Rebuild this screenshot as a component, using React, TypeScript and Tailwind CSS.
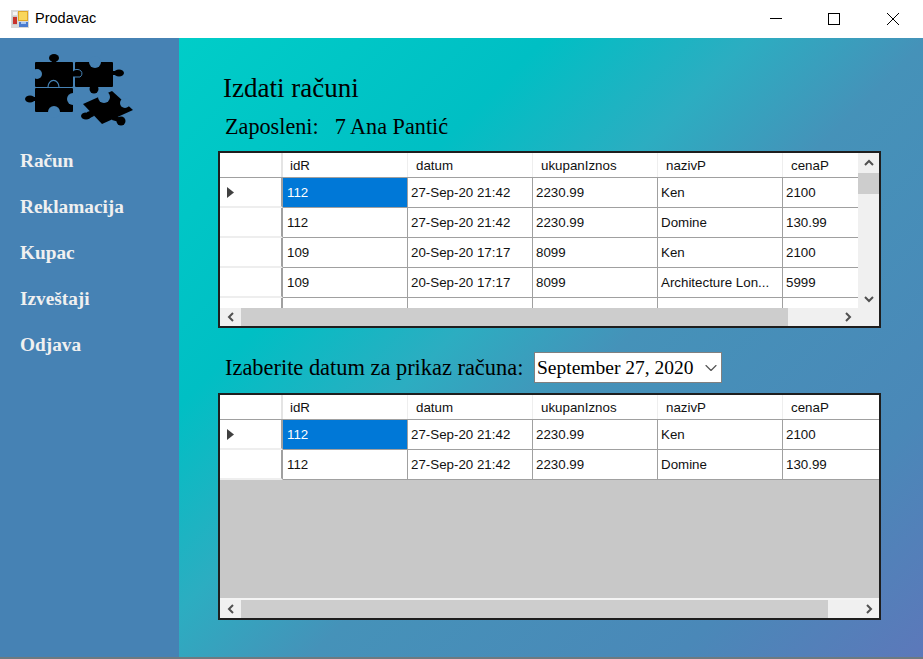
import React from 'react';
import { ChevronDown } from 'lucide-react';

const SERIF = "font-['Liberation_Serif',serif]";
const SANS = "font-['Liberation_Sans',sans-serif]";

const columns = ['idR', 'datum', 'ukupanIznos', 'nazivP', 'cenaP'];

const topRows = [
  ['112', '27-Sep-20 21:42', '2230.99', 'Ken', '2100'],
  ['112', '27-Sep-20 21:42', '2230.99', 'Domine', '130.99'],
  ['109', '20-Sep-20 17:17', '8099', 'Ken', '2100'],
  ['109', '20-Sep-20 17:17', '8099', 'Architecture Lon...', '5999'],
  ['', '', '', '', ''],
];

const bottomRows = topRows.slice(0, 2);

const menu = ['Račun', 'Reklamacija', 'Kupac', 'Izveštaji', 'Odjava'];

const ArrowIcon = ({ dir }: { dir: 'left' | 'right' | 'up' | 'down' }) => {
  const d = {
    left: 'M7 1 L3 5 L7 9',
    right: 'M3 1 L7 5 L3 9',
    up: 'M1 7 L5 3 L9 7',
    down: 'M1 3 L5 7 L9 3',
  }[dir];
  return (
    <svg width="10" height="10" viewBox="0 0 10 10" fill="none" stroke="#505050" strokeWidth="2">
      <path d={d} />
    </svg>
  );
};

const PuzzleLogo = () => (
  <svg width="112" height="76" viewBox="0 0 112 76">
    <g transform="translate(-25 -53)">
      {/* top left */}
      <rect x="35" y="62" width="38" height="25" rx="1" fill="#000" />
      <rect x="52" y="58" width="4" height="6" fill="#000" />
      <ellipse cx="54" cy="58" rx="5" ry="4" fill="#000" />
      <circle cx="37" cy="74" r="5" fill="#4682b4" />
      {/* top right */}
      <rect x="75" y="62" width="38" height="25" rx="1" fill="#000" />
      <circle cx="95" cy="62" r="6" fill="#4682b4" />
      <rect x="112" y="71" width="6" height="4" fill="#000" />
      <ellipse cx="119" cy="73" rx="5" ry="3.5" fill="#000" />
      <rect x="92" y="85" width="4" height="4" fill="#000" />
      <circle cx="94" cy="89" r="4.5" fill="#000" />
      <path d="M73 71 a5 4 0 0 1 8 0 a4 4 0 0 1 -1 6 l-7 0" fill="#000" stroke="#4682b4" strokeWidth="1" />
      {/* bottom left */}
      <rect x="35" y="88" width="38" height="24" rx="1" fill="#000" />
      <rect x="31" y="97" width="6" height="4" fill="#000" />
      <ellipse cx="30" cy="99" rx="5" ry="3.5" fill="#000" />
      <circle cx="73" cy="99" r="6" fill="#4682b4" />
      <circle cx="54" cy="112" r="6" fill="#4682b4" />
      <path d="M48 87 a5 6 0 0 1 11 0" fill="#000" stroke="#4682b4" strokeWidth="1.2" />
      {/* rotated piece */}
      <path d="M83 104 L112 91 L133 110 L102 124 Z" fill="#000" />
      <circle cx="104" cy="97" r="6" fill="#4682b4" />
      <circle cx="125" cy="103" r="5" fill="#4682b4" />
      <ellipse cx="86" cy="116" rx="5" ry="3.5" fill="#000" />
      <path d="M87 112 L93 110 L94 116 L88 119 Z" fill="#000" />
      <circle cx="121" cy="121" r="4.5" fill="#000" />
      <path d="M113 114 L120 118 L119 122 L112 120 Z" fill="#000" />
    </g>
  </svg>
);

const WindowIcon = () => (
  <svg width="18" height="18" viewBox="0 0 18 18">
    <rect x="0" y="0" width="18" height="18" fill="#d8d8d8" />
    <rect x="2" y="2" width="4" height="3" fill="#f4f4f4" />
    <rect x="1" y="6" width="5" height="9" fill="#c9c9c9" />
    <rect x="2" y="7" width="4" height="7" fill="#c8322c" />
    <rect x="7" y="1" width="10" height="10" fill="#e0a526" />
    <rect x="8" y="2" width="8" height="8" fill="#f9d65c" />
    <rect x="8" y="12" width="9" height="5" fill="#4a7bd0" />
    <rect x="10" y="12" width="5" height="2" fill="#a9c6f0" />
  </svg>
);

interface ScrollBarProps {
  thumbWidth: number;
  arrowInset: number;
}

const HScroll = ({ thumbWidth, arrowInset }: ScrollBarProps) => (
  <div className="flex h-[18px] items-center bg-[#f0f0f0]">
    <div className="flex w-[21px] justify-center">
      <ArrowIcon dir="left" />
    </div>
    <div className="h-full bg-[#cdcdcd]" style={{ width: thumbWidth }} />
    <div className="flex flex-1 items-center justify-end" style={{ paddingRight: arrowInset }}>
      <ArrowIcon dir="right" />
    </div>
  </div>
);

const GridHeader = () => (
  <div className="flex h-[25px] shrink-0 border-b border-[#a0a0a0]">
    <div className="w-[63px] shrink-0 border-r-2 border-[#e4e4e4]" />
    {columns.map((c, i) => (
      <div
        key={c}
        className={`flex w-[125px] shrink-0 items-center border-r border-[#eeeeee] pt-[1px] text-[13.33px] text-[#111] ${
          i === 0 ? 'pl-[7px]' : 'pl-[8px]'
        }`}
      >
        {c}
      </div>
    ))}
  </div>
);

const GridRow = ({ row, selected }: { row: string[]; selected: boolean }) => (
  <div className="flex h-[30px] shrink-0">
    <div className="flex w-[63px] shrink-0 items-center border-r-2 border-b-2 border-r-[#a0a0a0] border-b-[#eeeeee] pl-[7px]">
      {selected && (
        <svg width="7" height="11" viewBox="0 0 7 11">
          <path d="M0 0 L7 5.5 L0 11 Z" fill="#404040" />
        </svg>
      )}
    </div>
    {row.map((cell, i) => (
      <div
        key={i}
        className={`flex w-[125px] shrink-0 items-center whitespace-nowrap border-r border-b border-[#a0a0a0] text-[13.33px] ${
          i === 0 ? 'pl-[4px]' : 'pl-[3px]'
        } ${selected && i === 0 ? 'bg-[#0078d7] text-white' : 'text-[#111]'}`}
      >
        {cell}
      </div>
    ))}
  </div>
);

const TopGrid = () => (
  <div className={`h-[177px] w-[663px] border-2 border-[#1e1e1e] bg-white ${SANS}`}>
    <div className="flex h-[155px]">
      <div className="flex w-[638px] flex-col overflow-hidden">
        <GridHeader />
        {topRows.map((r, i) => (
          <GridRow key={i} row={r} selected={i === 0} />
        ))}
      </div>
      <div className="flex w-[21px] flex-col bg-[#f0f0f0]">
        <div className="flex h-[20px] items-center justify-center">
          <ArrowIcon dir="up" />
        </div>
        <div className="h-[21px] bg-[#cdcdcd]" />
        <div className="flex flex-1 items-end justify-center pb-[4px]">
          <ArrowIcon dir="down" />
        </div>
      </div>
    </div>
    <HScroll thumbWidth={547} arrowInset={26} />
  </div>
);

const BottomGrid = () => (
  <div className={`flex h-[227px] w-[663px] flex-col border-2 border-[#1e1e1e] bg-[#c8c8c8] ${SANS}`}>
    <div className="flex-1 overflow-hidden">
      <div className="bg-white">
        <GridHeader />
        {bottomRows.map((r, i) => (
          <GridRow key={i} row={r} selected={i === 0} />
        ))}
      </div>
    </div>
    <div className="border-t-2 border-[#f4f4f4]">
      <HScroll thumbWidth={587} arrowInset={5} />
    </div>
  </div>
);

export default function App() {
  return (
    <div className="flex h-[659px] w-[923px] flex-col overflow-hidden bg-white">
      {/* title bar */}
      <div className={`flex h-[38px] shrink-0 items-center pl-[11px] text-[14.5px] text-black ${SANS}`}>
        <WindowIcon />
        <span className="ml-[6px]">Prodavac</span>
        <div className="ml-auto flex h-full items-center">
          <svg width="59" height="38" viewBox="0 0 59 38" stroke="#000" strokeWidth="1">
            <path d="M24 18.5 H36" />
          </svg>
          <svg width="59" height="38" viewBox="0 0 59 38" fill="none" stroke="#000" strokeWidth="1">
            <rect x="23.5" y="13.5" width="11" height="11" />
          </svg>
          <svg width="59" height="38" viewBox="0 0 59 38" fill="none" stroke="#000" strokeWidth="1">
            <path d="M23 13 L35 25 M35 13 L23 25" />
          </svg>
        </div>
      </div>

      <div className="flex h-[619px] shrink-0">
        {/* sidebar */}
        <div className={`w-[179px] shrink-0 bg-[#4682b4] ${SERIF}`}>
          <div className="h-[100px] pl-[25px] pt-[15px]">
            <PuzzleLogo />
          </div>
          <nav className="flex flex-col gap-[25px] pl-[20px] pt-[12px]">
            {menu.map((m) => (
              <div key={m} className="h-[21px] text-[19.3px] font-bold leading-[21px] text-[#f0f0f0]">
                {m}
              </div>
            ))}
          </nav>
        </div>

        {/* main */}
        <div className={`flex-1 bg-[linear-gradient(135deg,#00cdc8_0%,#00bfc4_27%,#2cadc1_42%,#4592b9_55%,#4a88b8_82%,#5c78ba_100%)] pl-[39px] ${SERIF}`}>
          <h1 className="pl-[5px] pt-[33px] text-[27px] leading-[34px] text-black">Izdati računi</h1>
          <div className="mt-[7px] flex h-[30px] items-center gap-[16px] pl-[7px] text-[22.2px] text-black">
            <span>Zaposleni:</span>
            <span>7 Ana Pantić</span>
          </div>
          <div className="mt-[9px]">
            <TopGrid />
          </div>
          <div className="mt-[24px] flex h-[31px] items-center">
            <span className="w-[316px] whitespace-nowrap pl-[7px] text-[22.4px] text-black">Izaberite datum za prikaz računa:</span>
            <div className="flex h-[31px] w-[188px] items-center justify-between border border-[#808080] bg-white pl-[2px] text-[19.5px] text-black">
              <span className="whitespace-nowrap">September 27, 2020</span>
              <ChevronDown size={20} strokeWidth={1.4} color="#555" />
            </div>
          </div>
          <div className="mt-[10px]">
            <BottomGrid />
          </div>
        </div>
      </div>
      <div className="h-[2px] shrink-0 bg-[#6e7a80]" />
    </div>
  );
}
